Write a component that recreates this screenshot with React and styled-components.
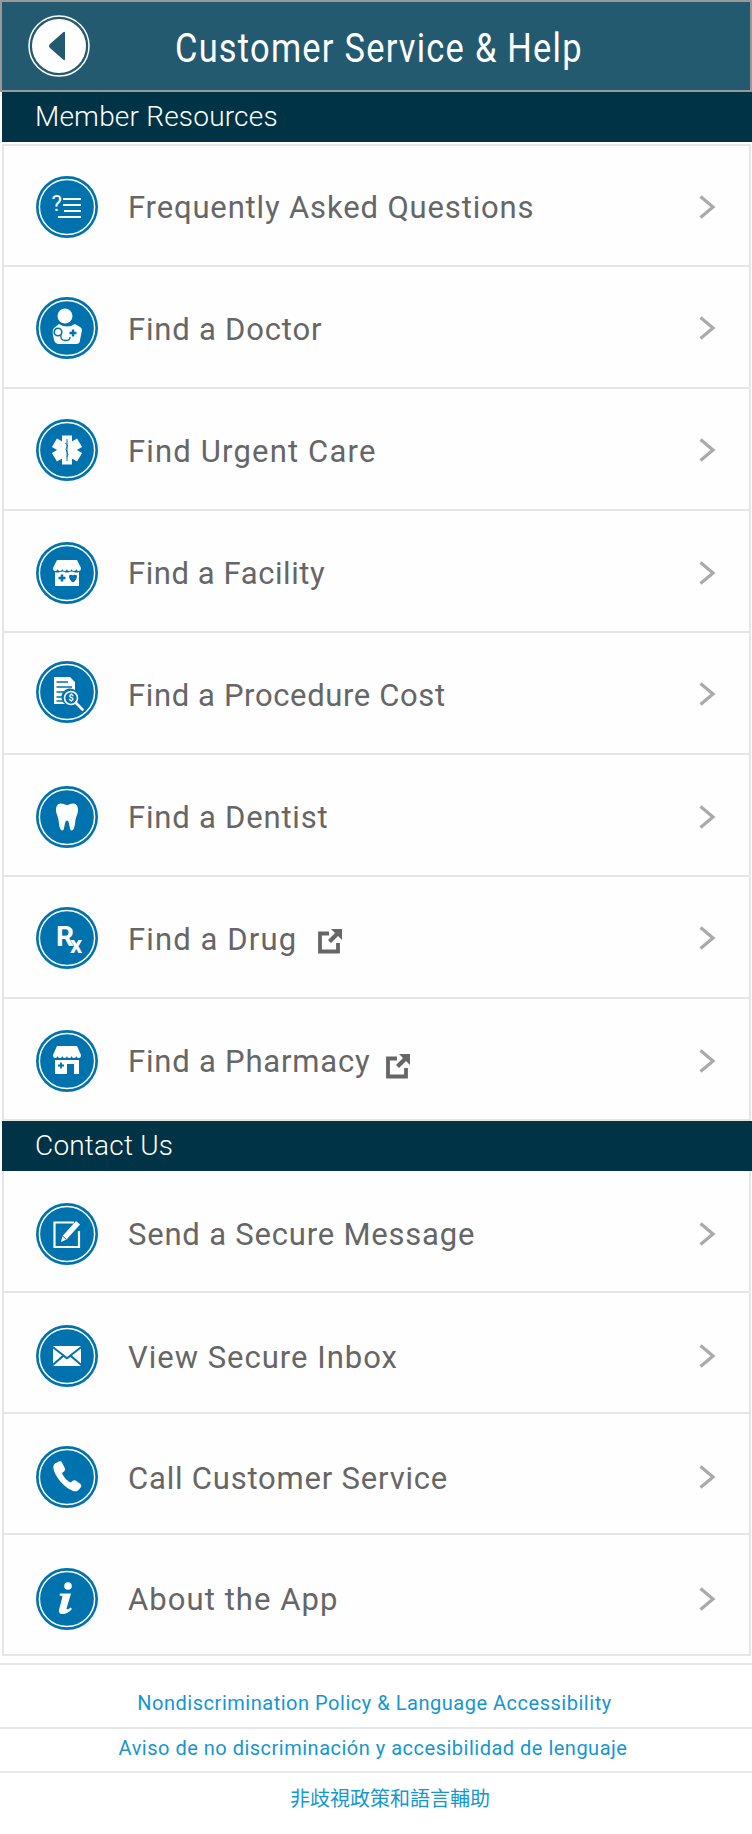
import React from "react";
import styled, { createGlobalStyle } from "styled-components";

const Global = createGlobalStyle`
  html, body { margin: 0; padding: 0; background: #fff; }
  body { font-family: Roboto, "Liberation Sans", sans-serif; }
`;

const Page = styled.div`
  width: 752px;
  height: 1834px;
  overflow: hidden;
  background: #fff;
`;

const Header = styled.header`
  height: 92px;
  box-sizing: border-box;
  border: 2px solid #999;
  background: #235a70;
  display: flex;
  align-items: center;
  padding-left: 26px;
`;

const BackButton = styled.button`
  width: 62px;
  height: 62px;
  padding: 0;
  border: 0;
  background: none;
  display: block;
`;

const Title = styled.h1`
  margin: 4px 0 0 85px;
  font-family: Roboto, sans-serif;
  font-weight: 400;
  font-size: 40px;
  letter-spacing: 1.45px;
  color: #fff;
  white-space: nowrap;
  transform: scaleX(0.86);
  transform-origin: left center;
`;

const SectionBar = styled.div`
  height: 50px;
  margin-left: 2px;
  padding: 0 0 2px 33px;
  box-sizing: border-box;
  display: flex;
  align-items: center;
  background: #003346;
  color: #fff;
  font-size: 28px;
  letter-spacing: 0.2px;
  font-weight: 300;
`;

const List = styled.div`
  margin-top: ${(p) => (p.$first ? "2px" : "0")};
  margin-left: 2px;
  margin-right: 1px;
  border-left: 2px solid #e6e6e6;
  border-right: 2px solid #e6e6e6;
  border-top: ${(p) => (p.$first ? "2px solid #e6e6e6" : "0")};
`;

const Row = styled.div`
  height: ${(p) => p.$h}px;
  box-sizing: border-box;
  border-bottom: 2px solid #e6e6e6;
  background: #fefefe;
  display: flex;
  align-items: center;
  padding: ${(p) => p.$nudge}px 33px 0 32px;
`;

const IconBox = styled.span`
  width: 62px;
  height: 62px;
  flex: none;
  display: block;
  margin-bottom: ${(p) => p.$lift}px;
`;

const Label = styled.span`
  margin-left: 30px;
  padding-top: 2px;
  font-size: 31px;
  letter-spacing: ${(p) => p.$ls}px;
  color: #666;
  white-space: nowrap;
`;

const External = styled.svg`
  margin-left: ${(p) => p.$gap}px;
  margin-top: ${(p) => p.$top}px;
  flex: none;
`;

const Chevron = styled.svg`
  margin-left: auto;
  flex: none;
`;

const Footer = styled.footer`
  margin-top: 7px;
  border-top: 2px solid #e8e8e8;
`;

const FooterLink = styled.a`
  display: flex;
  align-items: center;
  justify-content: center;
  height: ${(p) => p.$h}px;
  box-sizing: border-box;
  padding: ${(p) => p.$top}px ${(p) => p.$right}px ${(p) => p.$bottom}px ${(p) => p.$left}px;
  border-bottom: ${(p) => (p.$line ? "2px solid #e8e8e8" : "0")};
  color: #1596d0;
  font-size: 20px;
  letter-spacing: ${(p) => p.$ls}px;
  font-family: Roboto, "Noto Sans CJK TC", sans-serif;
  white-space: nowrap;
`;

const w = "#fff";
const b = "#0072ae";

const Badge = ({ children, lift = 0 }) => (
  <IconBox $lift={lift}>
    <svg width="62" height="62" viewBox="-31 -31 62 62">
      <circle r="31" fill={b} />
      <circle r="27.6" fill="none" stroke={w} strokeWidth="1.5" />
      {children}
    </svg>
  </IconBox>
);

const icons = {
  faq: (
    <>
      <text x="-15.500" y="4" fontSize="22" fontWeight="400" fill={w} fontFamily="Roboto, sans-serif">?</text>
      <path d="M-4-8H14M-4-2H14M-3 4H14M-9 10H14" stroke={w} strokeWidth="2" />
    </>
  ),
  doctor: (
    <>
      <circle cx="-2" cy="-12" r="7.500" fill={w} />
      <path d="M-8-4-13 0Q-15 2-14 7L-13 12Q-12 16-8 16H9Q13 16 13 12L15 2Q15 0 13-1L8-4Q0 1-8-4Z" fill={w} />
      <circle cx="-9" cy="4" r="3.800" fill={w} stroke={b} strokeWidth="1.600" />
      <path d="M-6 7Q-7 12-2 12.500Q3 13 3 9" fill="none" stroke={b} strokeWidth="1.400" />
      <path d="M2.500 5h7M6 1.500v7" stroke={b} strokeWidth="2.400" />
    </>
  ),
  urgent: (
    <>
      <g fill={w}>
        <rect x="-5" y="-14.500" width="10" height="29" />
        <rect x="-5" y="-14.500" width="10" height="29" transform="rotate(60)" />
        <rect x="-5" y="-14.500" width="10" height="29" transform="rotate(120)" />
      </g>
      <path d="M0-11V11M-1.800-7Q2-5 0-3T0 2 0 7" fill="none" stroke={b} strokeWidth="1" />
    </>
  ),
  facility: (
    <>
      <path d="M-10-13H10L14-5Q14-2 11.700-2 9.400-2 9.300-4 9-2 7-2 4.700-2 4.600-4 4.300-2 2.300-2 0-2 0-4-.3-2-2.300-2-4.600-2-4.700-4-5-2-7-2-9.300-2-9.400-4-9.700-2-11.700-2-14-2-14-5Z" fill={w} />
      <path d="M-12-1Q-10 0-7-1T-2.300-1 2.300-1 7-1 12-1V13H-12Z" fill={w} />
      <path d="M-8.500 5h7M-5 1.500v7" stroke={b} strokeWidth="2.600" />
      <path d="M2 2.500Q4.500 1 6 2.500 7.500 1 10 2.500 10 7 6 9.500 2 7 2 2.500Z" fill={b} />
    </>
  ),
  cost: (
    <>
      <path d="M-13-15H3L8-10V-2A8 8 0 0 0-2 12H-13Z" fill={w} />
      <path d="M-10.500-10H1M-10.500-5H5M-10.500 0H-1M-10.500 5H-4M-10.500 9H-4" stroke={b} strokeWidth="1.500" />
      <circle cx="4" cy="6" r="6.500" fill={b} stroke={w} strokeWidth="1.600" />
      <text x="4" y="9.200" fontSize="9" fontWeight="700" textAnchor="middle" fill={w} fontFamily="Roboto, sans-serif">$</text>
      <path d="M9 11 15.500 17.500" stroke={w} strokeWidth="2.600" strokeLinecap="round" />
    </>
  ),
  dentist: (
    <path d="M-6-13.500C-3-13.500-2-12 0-12S3-13.500 6-13.500C10-13.500 11-10 11-7 11-3 9-1 8.500 3 8 7 7.500 13.500 4.500 13.500 2 13.500 3 3.500 0 3.500S-2 13.500-4.500 13.500C-7.500 13.500-8 7-8.500 3-9-1-11-3-11-7-11-10-10-13.500-6-13.500Z" fill={w} />
  ),
  rx: (
    <text x="-11" y="8" fontSize="28" fontWeight="700" fill={w} fontFamily="Roboto, sans-serif">
      R<tspan dx="-4" dy="7" fontSize="24">x</tspan>
    </text>
  ),
  pharmacy: (
    <>
      <path d="M-10-15H10L14-6Q14-3 11.700-3 9.400-3 9.300-5 9-3 7-3 4.700-3 4.600-5 4.300-3 2.300-3 0-3 0-5-.3-3-2.300-3-4.600-3-4.700-5-5-3-7-3-9.300-3-9.400-5-9.700-3-11.700-3-14-3-14-6Z" fill={w} />
      <path d="M-12-1H12V13H7V3H0V13H-12Z" fill={w} />
      <path d="M-9 4.500h6M-6 1.500v6" stroke={b} strokeWidth="1.800" />
    </>
  ),
  edit: (
    <>
      <path d="M7-11.500H-12.500V13H12V-3" fill="none" stroke={w} strokeWidth="2.200" />
      <path d="M-6 8-4.500 2 9-13 13-9.500-.5 5.500Z" fill={w} />
      <path d="M-4.500 2-.5 5.500" stroke={b} strokeWidth="1" />
    </>
  ),
  mail: (
    <>
      <path d="M-14-10H14L0 1Z" fill={w} />
      <path d="M-14-7.500-5-.5-14 7.500ZM14-7.500 5-.5 14 7.500ZM-14 10-3.500 1 0 3.500 3.500 1 14 10Z" fill={w} />
    </>
  ),
  phone: (
    <path d="M-12-13.500-8-15.500C-6.500-16-5.500-15.500-5-14.500L-2-8.500C-1.500-7.500-2-6.500-3-5.500L-5-4C-4-1 0 4 3.500 5.500L5.500 4C6.500 3 7.500 3 8.500 3.500L13.500 7C14.500 8 14.500 9 14 10L12 12.500C10.500 14.500 8 15 5 13.500-4 9.500-12-1-13.500-8-14-10.500-13.500-12.500-12-13.500Z" fill={w} />
  ),
  info: (
    <>
      <circle cx="1" cy="-13" r="3.800" fill={w} />
      <path d="M-7-5.500H4L-.5 9.500C-.5 11 1.500 10.500 3.500 8.500L5 10C2 13.500-1 15-4.500 15-7.500 15-8.500 13-8 11L-4.500-2.500Q-5-3.500-7.500-3.500Z" fill={w} />
    </>
  ),
};

const ExternalIcon = ({ gap, top }) => (
  <External $gap={gap} $top={top} width="24" height="25" viewBox="0 0 24 25">
    <path d="M11 4.500H2V22.500H20V14" fill="none" stroke="#666" strokeWidth="3.800" />
    <path d="M13 0H24V11L20 7 13 14 10 11 17 4Z" fill="#666" />
  </External>
);

const ChevronIcon = () => (
  <Chevron width="18" height="26" viewBox="0 0 18 26">
    <path d="M2.500 2.500 15 13 2.500 23.500" fill="none" stroke="#aaa" strokeWidth="3.200" />
  </Chevron>
);

const resources = [
  { icon: "faq", label: "Frequently Asked Questions", h: 121, nudge: 2, ls: 0.85 },
  { icon: "doctor", label: "Find a Doctor", h: 122, nudge: 2, ls: 0.8 },
  { icon: "urgent", label: "Find Urgent Care", h: 122, nudge: 2, ls: 1.17 },
  { icon: "facility", label: "Find a Facility", h: 122, nudge: 3, ls: 0.57 },
  { icon: "cost", label: "Find a Procedure Cost", h: 122, nudge: 2, ls: 0.63, lift: 4 },
  { icon: "dentist", label: "Find a Dentist", h: 122, nudge: 3, ls: 0.8 },
  { icon: "rx", label: "Find a Drug", h: 122, nudge: 2, ls: 1.12, ext: 21, extTop: 6 },
  { icon: "pharmacy", label: "Find a Pharmacy", h: 122, nudge: 3, ls: 0.8, ext: 16, extTop: 11 },
];

const contact = [
  { icon: "edit", label: "Send a Secure Message", h: 122, nudge: 5, ls: 0.8 },
  { icon: "mail", label: "View Secure Inbox", h: 121, nudge: 7, ls: 1 },
  { icon: "phone", label: "Call Customer Service", h: 121, nudge: 7, ls: 0.8 },
  { icon: "info", label: "About the App", h: 121, nudge: 8, ls: 1.07 },
];

const Rows = ({ items, first }) => (
  <List $first={first}>
    {items.map((it) => (
      <Row key={it.label} $h={it.h} $nudge={it.nudge}>
        <Badge lift={it.lift}>{icons[it.icon]}</Badge>
        <Label $ls={it.ls}>{it.label}</Label>
        {it.ext ? <ExternalIcon gap={it.ext} top={it.extTop} /> : null}
        <ChevronIcon />
      </Row>
    ))}
  </List>
);

export default function App() {
  return (
    <Page>
      <Global />
      <Header>
        <BackButton aria-label="Back">
          <svg width="62" height="62" viewBox="-31 -31 62 62">
            <circle r="30" fill="none" stroke="#fff" strokeWidth="1.500" />
            <circle r="27" fill="#fff" />
            <path d="M6-13V13Q6 15 4 13.500L-9 2Q-11 0-9-2L4-13.500Q6-15 6-13Z" fill="#235a70" />
          </svg>
        </BackButton>
        <Title>Customer Service &amp; Help</Title>
      </Header>
      <SectionBar>Member Resources</SectionBar>
      <Rows items={resources} first />
      <SectionBar>Contact Us</SectionBar>
      <Rows items={contact} />
      <Footer>
        <FooterLink $h={64} $top={14} $right={3} $bottom={0} $left={0} $ls={0.52} $line>Nondiscrimination Policy &amp; Language Accessibility</FooterLink>
        <FooterLink $h={44} $top={0} $right={6} $bottom={4} $left={0} $ls={0.5} $line>Aviso de no discriminación y accesibilidad de lenguaje</FooterLink>
        <FooterLink $h={54} $top={0} $right={0} $bottom={6} $left={28} $ls={0}>非歧視政策和語言輔助</FooterLink>
      </Footer>
    </Page>
  );
}
